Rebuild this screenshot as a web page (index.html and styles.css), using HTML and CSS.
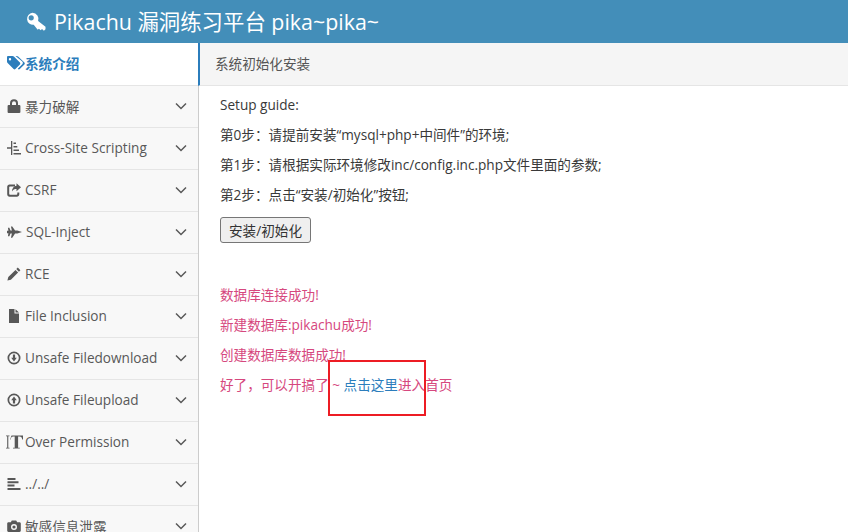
FILE: index.html
```html
<!DOCTYPE html>
<html>
<head>
<meta http-equiv="Content-Type" content="text/html; charset=utf-8">
<title>Pikachu 漏洞练习平台</title>
<link rel="stylesheet" href="styles.css">
</head>

<body>

<div class="navbar">
  <svg class="navbar__icon" viewBox="0 0 20 20"><path fill-rule="evenodd" d="M6.5 0.8a6 6 0 0 1 5.6 8.1l7.4 5.8v2.6l-1.6 1.4-1.9-1.6-1.3 1.2-1.8-1.6-1.2 1-4-4.9A6 6 0 1 1 6.5 0.8zM5.2 3.2a2.600 2.600 0 1 0 0 5.200 2.600 2.600 0 0 0 0-5.200z"/></svg>
  <span class="navbar__brand">Pikachu 漏洞练习平台 pika~pika~</span>
</div>

<div class="layout">
  <ul class="sidebar">
    <li class="sidebar__item sidebar__item--active">
      <svg class="sidebar__icon sidebar__icon--tags" viewBox="0 0 18 14"><path fill-rule="evenodd" d="M0 1.2C0 .5.5 0 1.2 0h4.3c.5 0 1 .2 1.4.6l6 6c.5.5.5 1.3 0 1.8l-4.500 4.700c-.5.5-1.300.5-1.800 0l-6-6.200C.2 6.500 0 6 0 5.500zM3 2a1.200 1.200 0 1 0 0 2.400A1.200 1.200 0 0 0 3 2z"/><path d="M8.500 0h1.200c.5 0 1 .2 1.400.6l6.300 6c.5.5.5 1.300 0 1.800l-4.600 4.700c-.5.5-1.300.5-1.800 0l-.3-.3 4.600-4.600c.8-.8.8-1.800 0-2.600z"/></svg>
      <span>系统介绍</span>
    </li>
    <li class="sidebar__item">
      <svg class="sidebar__icon" viewBox="0 0 14 14"><path fill-rule="evenodd" d="M3 6V4.200a4 4 0 0 1 8 0V6h1.500c.5 0 .9.400.9.900v6.200c0 .5-.4.900-.9.900h-11c-.5 0-.9-.4-.9-.9V6.900c0-.5.400-.9.900-.9zm2 0h4V4.200a2 2 0 0 0-4 0z"/></svg>
      <span>暴力破解</span>
      <svg class="sidebar__arrow" viewBox="0 0 12 8"><path d="M1 1.500l5 5 5-5"/></svg>
    </li>
    <li class="sidebar__item">
      <svg class="sidebar__icon" viewBox="0 0 14 14"><path d="M4 0h1.300v14H4zM0 6.300h4v1.400H0zM6.500 1.500H9v1.500H6.500zM6.500 5h3.800v1.500H6.500zM6.500 8.500H12V10H6.500zM6.500 12H14v1.500H6.500z"/></svg>
      <span>Cross-Site Scripting</span>
      <svg class="sidebar__arrow" viewBox="0 0 12 8"><path d="M1 1.500l5 5 5-5"/></svg>
    </li>
    <li class="sidebar__item">
      <svg class="sidebar__icon" viewBox="0 0 14 14"><path fill-rule="evenodd" d="M2.500 1.500H8v2H3a.8.800 0 0 0-.8.800v6.700c0 .4.400.8.800.8h6.500c.4 0 .8-.4.800-.8V9.500h2v1.800c0 1.300-1.100 2.400-2.400 2.400H2.500C1.200 13.700.2 12.600.2 11.300V3.900C.2 2.600 1.200 1.500 2.500 1.500z"/><path d="M9.500.3L14 4.300 9.500 8.300V6C7.500 6 6 6.600 5 8.500 5 5.500 7 3 9.500 2.800z"/></svg>
      <span>CSRF</span>
      <svg class="sidebar__arrow" viewBox="0 0 12 8"><path d="M1 1.500l5 5 5-5"/></svg>
    </li>
    <li class="sidebar__item">
      <svg class="sidebar__icon sidebar__icon--jet" viewBox="0 0 16 12"><path d="M1 1.500h1.500l1.200 3H5.200L4.200 0h1.400l3 4.400h2.400L16 6l-5 1.600H8.600L5.600 12H4.200l1-4.500H3.700l-1.200 3H1l.5-3.200H0V4.700h1.500z"/></svg>
      <span class="sidebar__text--wide">SQL-Inject</span>
      <svg class="sidebar__arrow" viewBox="0 0 12 8"><path d="M1 1.500l5 5 5-5"/></svg>
    </li>
    <li class="sidebar__item">
      <svg class="sidebar__icon" viewBox="0 0 14 14"><path d="M10.800.6l2.600 2.600-1.500 1.500-2.600-2.600zM8.500 2.900l2.600 2.600-7.200 7.200-3.500.9.900-3.500z"/></svg>
      <span>RCE</span>
      <svg class="sidebar__arrow" viewBox="0 0 12 8"><path d="M1 1.500l5 5 5-5"/></svg>
    </li>
    <li class="sidebar__item">
      <svg class="sidebar__icon" viewBox="0 0 14 14"><path d="M2 0h5.500v4.500H12V14H2zM8.500.2L12 3.500H8.500z"/></svg>
      <span>File Inclusion</span>
      <svg class="sidebar__arrow" viewBox="0 0 12 8"><path d="M1 1.500l5 5 5-5"/></svg>
    </li>
    <li class="sidebar__item">
      <svg class="sidebar__icon" viewBox="0 0 14 14"><path fill-rule="evenodd" d="M7 .5a6.500 6.500 0 1 1 0 13 6.500 6.500 0 0 1 0-13zm0 1.700a4.800 4.800 0 1 0 0 9.600 4.800 4.800 0 0 0 0-9.600z"/><path d="M5.900 3.500h2.200v3.300h1.700L7 10.500 4.200 6.800h1.700z"/></svg>
      <span>Unsafe Filedownload</span>
      <svg class="sidebar__arrow" viewBox="0 0 12 8"><path d="M1 1.500l5 5 5-5"/></svg>
    </li>
    <li class="sidebar__item">
      <svg class="sidebar__icon" viewBox="0 0 14 14"><path fill-rule="evenodd" d="M7 .5a6.500 6.500 0 1 1 0 13 6.500 6.500 0 0 1 0-13zm0 1.700a4.800 4.800 0 1 0 0 9.600 4.800 4.800 0 0 0 0-9.600z"/><path d="M5.900 10.500h2.200V7.200h1.700L7 3.500 4.200 7.200h1.700z"/></svg>
      <span>Unsafe Fileupload</span>
      <svg class="sidebar__arrow" viewBox="0 0 12 8"><path d="M1 1.500l5 5 5-5"/></svg>
    </li>
    <li class="sidebar__item">
      <svg class="sidebar__icon sidebar__icon--text" viewBox="0 0 17 15"><path d="M0 1h3.500v.8H2.300v11.400h1.200v.8H0v-.8h1.200V1.800H0zM5.500 1H17v4h-.8c-.2-2-.8-3.100-2.900-3.100h-1.200v11.300h1.700v.8H7v-.8h1.700V1.900H7.500C5.400 1.900 5 3 4.700 5h-.6z"/></svg>
      <span>Over Permission</span>
      <svg class="sidebar__arrow" viewBox="0 0 12 8"><path d="M1 1.500l5 5 5-5"/></svg>
    </li>
    <li class="sidebar__item">
      <svg class="sidebar__icon" viewBox="0 0 14 14"><path d="M.5 1h8v2h-8zM.5 4.300h11v2h-11zM.5 7.600h7v2h-7zM.5 11h13v2H.5z"/></svg>
      <span>../../</span>
      <svg class="sidebar__arrow" viewBox="0 0 12 8"><path d="M1 1.500l5 5 5-5"/></svg>
    </li>
    <li class="sidebar__item">
      <svg class="sidebar__icon" viewBox="0 0 14 14"><path fill-rule="evenodd" d="M4.800 1.500h4.400l1 1.800h2.300c.8 0 1.300.6 1.300 1.300v7c0 .8-.5 1.400-1.300 1.400H1.500C.7 13 .2 12.400.2 11.600v-7c0-.7.500-1.300 1.300-1.300h2.300zM7 5a3 3 0 1 0 0 6 3 3 0 0 0 0-6zm0 1.400a1.600 1.600 0 1 1 0 3.200 1.600 1.600 0 0 1 0-3.200z"/></svg>
      <span>敏感信息泄露</span>
      <svg class="sidebar__arrow" viewBox="0 0 12 8"><path d="M1 1.500l5 5 5-5"/></svg>
    </li>
  </ul>

  <div class="main">
    <div class="breadcrumb">系统初始化安装</div>
    <div class="content">
      <p class="content__line">Setup guide:</p>
      <p class="content__line">第0步：请提前安装“mysql+php+中间件”的环境;</p>
      <p class="content__line">第1步：请根据实际环境修改inc/config.inc.php文件里面的参数;</p>
      <p class="content__line">第2步：点击“安装/初始化”按钮;</p>
      <button class="content__btn" type="button">安装/初始化</button>
      <p class="content__line content__line--msg content__line--first">数据库连接成功!</p>
      <p class="content__line content__line--msg">新建数据库:pikachu成功!</p>
      <p class="content__line content__line--msg">创建数据库数据成功!</p>
      <p class="content__line content__line--msg">好了，可以开搞了 ~ <a class="content__link" href="#">点击这里</a>进入首页</p>
    </div>
  </div>
</div>

<div class="mark"></div>

</body>

</html>
```

FILE: styles.css
```css
/* reset */
body,ul,li,p{margin:0;padding:0}
ul{list-style:none}

/* page */
html,body{height:100%;overflow:hidden}
body{position:relative;font-family:"Open Sans","Noto Sans CJK SC",sans-serif;font-size:13.6px;color:#393939;background:#fff}

.navbar{display:flex;align-items:center;gap:8px;height:43px;padding-left:26px;box-sizing:border-box;background:#438eb9;color:#fff}
.navbar__icon{width:20px;height:20px;fill:#fff}
.navbar__brand{font-size:21.4px;line-height:1}

.layout{display:flex;height:489px}

.sidebar{flex:0 0 198px;height:489px;overflow:hidden;background:#f8f8f8;border-right:1px solid #ccc}
.sidebar__item{display:flex;align-items:center;height:42px;box-sizing:border-box;padding:0 11px 2px 7px;border-bottom:1px solid #e5e5e5;color:#585858}
.sidebar__item > span{margin-left:4px;white-space:nowrap}
.sidebar__item--active{height:43px;background:#fff;color:#2b7dbc;font-weight:700}
.sidebar__item--active > span{margin-left:0}
.sidebar__icon{flex:0 0 14px;width:14px;height:14px;fill:#585858}
.sidebar__icon--tags{flex-basis:18px;width:18px;fill:#2b7dbc}
.sidebar__icon--jet{flex-basis:15px;width:15px;height:12px}
.sidebar__icon--text{flex:0 0 17px;width:17px;height:16px;margin-left:-1px;margin-right:-2px}
.sidebar__arrow{width:12px;height:8px;margin-left:auto;fill:none;stroke:#585858;stroke-width:1.500}

.main{flex:1;min-width:0}
.breadcrumb{height:43px;line-height:42px;padding-left:15px;background:#f5f5f5;border-left:2px solid #2b7dbc;border-bottom:1px solid #e5e5e5;box-sizing:border-box;margin-left:-1px;color:#555}

.content{padding:0 0 0 21px}
.content__line{height:30px;line-height:30px;white-space:pre}
.content__line:first-child{margin-top:4px}
.content__line--msg{color:#d6487e}
.content__line--first{margin-top:37px}
.content__link{color:#2b7dbc;text-decoration:none}
.content__btn{display:block;width:91px;height:26px;margin-top:7px;padding:0;font-family:inherit;font-size:13.6px;color:#333;background:#efefef;border:1px solid #767676;border-radius:3px}

/* red box drawn over the screenshot */
.mark{position:absolute;left:328px;top:360px;width:98px;height:56px;box-sizing:border-box;border:2px solid #ed1c24}
```
